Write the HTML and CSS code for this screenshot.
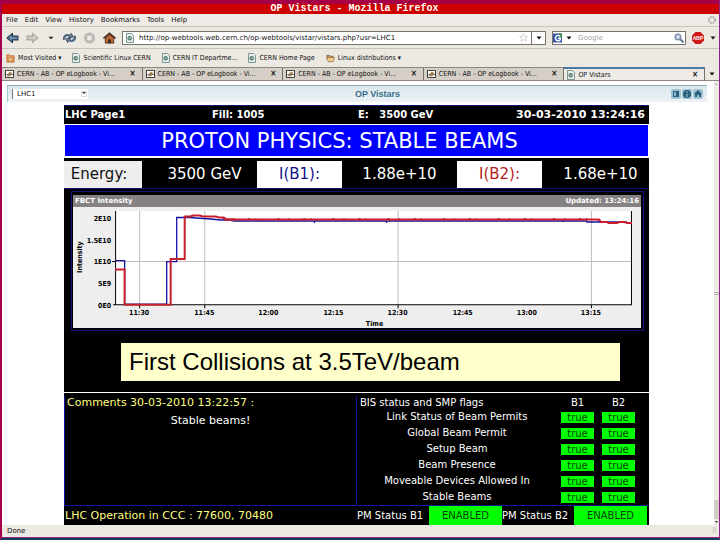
FILE: index.html
```html
<!DOCTYPE html>
<html lang="en">
<head>
<meta charset="utf-8">
<title>OP Vistars - Mozilla Firefox</title>
<link rel="stylesheet" href="styles.css">
</head>
<body>
<svg class="defs" aria-hidden="true">
  <symbol id="page" viewBox="0 0 8 10"><path d="M.5.5h5l2 2v7h-7z" fill="#e8eeea" stroke="#7c9990"/><circle cx="3.7" cy="5.3" r="2.2" fill="#527b74"/><path d="M2.5 5.2h2.3" stroke="#cfe0da"/></symbol>
  <symbol id="log" viewBox="0 0 10 9"><path d="M.5.5h9v8h-9z" fill="#fff" stroke="#222"/><path d="M2 7l3-5 3 1-2 4z" fill="#a08458"/><path d="M1.500 5.500l3-1M6 5h3" stroke="#6d5432"/></symbol>
  <symbol id="arrow" viewBox="0 0 12 10"><path d="M1 5l5-4.300v2.600h5v3.400H6v2.600z" stroke-linejoin="round"/></symbol>
</svg>
<div class="window">
  <header class="titlebar">OP Vistars - Mozilla Firefox</header>
  <nav class="menubar">
    <button>File</button><button>Edit</button><button>View</button><button>History</button><button>Bookmarks</button><button>Tools</button><button>Help</button>
    <svg class="throbber" viewBox="0 0 8 8"><circle cx="4" cy="4" r="3" fill="none" stroke="#aaa59d" stroke-width="2" stroke-dasharray="1.400 1"/></svg>
  </nav>
  <div class="toolbar">
    <div class="nav-buttons">
      <button aria-label="Back"><svg viewBox="0 0 12 10" fill="#668cab" stroke="#203448"><use href="#arrow"/></svg></button>
      <button aria-label="Forward"><svg viewBox="0 0 12 10"><path d="M1 3.300h5V1l5 4-5 4V6.700H1z" fill="#cfccc6" stroke="#aaa7a1"/></svg></button>
      <button class="narrow" aria-label="Recent pages"><svg viewBox="0 0 12 10"><path d="M3 3.500h6L6 6.500z" fill="#222"/></svg></button>
      <button aria-label="Reload"><svg viewBox="0 0 14 12"><path d="M2 7c0-3 2-4 5-3l-1 2 5-1-2-4-1 2C3 1 0 3 .500 8zM12 4c0 4-2 5-5 4l1-2-5 1 2 4 1-2c5 2 8 0 7.500-5z" fill="#6487a8" stroke="#22384e" stroke-width=".8"/></svg></button>
      <button aria-label="Stop"><svg viewBox="0 0 12 12"><circle cx="6" cy="6" r="5.500" fill="#bcb9b4"/><path d="M4 4l4 4M8 4L4 8" stroke="#f3f0ec" stroke-width="2"/></svg></button>
      <button aria-label="Home"><svg viewBox="0 0 14 12"><path d="M2.500 6v5.500h9V6L7 2z" fill="#b96936" stroke="#55301c"/><path d="M.500 6.500L7 1l6.500 5.500" fill="none" stroke="#4d2a1c" stroke-width="1.800"/><path d="M5.500 7.500h3v4h-3z" fill="#3e2519"/></svg></button>
    </div>
    <div class="urlbar">
      <svg class="favicon"><use href="#page"/></svg>
      <input class="url" type="text" aria-label="Location" value="http://op-webtools.web.cern.ch/op-webtools/vistar/vistars.php?usr=LHC1">
      <svg class="star" viewBox="0 0 10 10"><path d="M5 .8l1.200 2.900 3.200.2-2.500 2 .9 3.200L5 7.400 2.200 9.100l.9-3.200-2.500-2 3.200-.2z" fill="#fff" stroke="#c8c5c0" stroke-width=".8"/></svg>
      <button class="drop" aria-label="Show history"><svg viewBox="0 0 6 6"><path d="M.5 1.500h5L3 4.500z" fill="#111"/></svg></button>
    </div>
    <div class="search">
      <svg class="engine" viewBox="0 0 10 10"><path d="M0 0h10v10H0z" fill="#3259a8"/><path d="M6 0h4v5H7z" fill="#3b8b4c"/><path d="M7.800 3A3 3 0 1 0 8 7V5.300H5.500" fill="none" stroke="#fff" stroke-width="1.600"/></svg>
      <svg class="tri" viewBox="0 0 6 6"><path d="M.5 1.500h5L3 4.500z" fill="#111"/></svg>
      <input type="text" aria-label="Search" placeholder="Google">
      <svg class="glass" viewBox="0 0 10 10"><circle cx="4" cy="4" r="2.800" fill="#c9daea" stroke="#8094ad" stroke-width="1.500"/><path d="M6 6l3.500 3.500" stroke="#607a99" stroke-width="2"/></svg>
    </div>
    <button class="abp" aria-label="Adblock Plus"><svg viewBox="0 0 12 12"><path d="M3.500 0h5L12 3.500v5L8.500 12h-5L0 8.500v-5z" fill="#cf1717"/><text x="6" y="8.200" text-anchor="middle">ABP</text></svg></button>
    <svg class="tri" viewBox="0 0 6 6"><path d="M.5 1.500h5L3 4.500z" fill="#111"/></svg>
  </div>
  <nav class="bookmarks">
    <a href="#"><svg viewBox="0 0 10 10"><path d="M1 1h3l1 1h4v7H1z" fill="#dda069" stroke="#bd6f32"/><path d="M5 3l1 2 2 .2-1.500 1.300.5 2-2-1-2 1 .5-2L2 5.200 4 5z" fill="#f5d6a7" stroke="#c1661f" stroke-width=".6"/></svg>Most Visited ▾</a>
    <a href="#"><svg class="favicon"><use href="#page"/></svg>Scientific Linux CERN</a>
    <a href="#"><svg class="favicon"><use href="#page"/></svg>CERN IT Departme...</a>
    <a href="#"><svg class="favicon"><use href="#page"/></svg>CERN Home Page</a>
    <a href="#"><svg viewBox="0 0 10 10"><path d="M1 1.500h3l1 1h3V5H1z" fill="#c29152" stroke="#71522e" stroke-width=".7"/><path d="M1 4h8.500L8 8.500H2.500z" fill="#efd08d" stroke="#8c6533" stroke-width=".7"/></svg>Linux distributions ▾</a>
  </nav>
  <div class="tabs">
    <button class="tab"><svg><use href="#log"/></svg><span>CERN - AB - OP eLogbook - Vi...</span><b>×</b></button>
    <button class="tab"><svg><use href="#log"/></svg><span>CERN - AB - OP eLogbook - Vi...</span><b>×</b></button>
    <button class="tab"><svg><use href="#log"/></svg><span>CERN - AB - OP eLogbook - Vi...</span><b>×</b></button>
    <button class="tab"><svg><use href="#log"/></svg><span>CERN - AB - OP eLogbook - Vi...</span><b>×</b></button>
    <button class="tab active"><svg class="favicon"><use href="#page"/></svg><span>OP Vistars</span><b>×</b></button>
    <button class="tab-list" aria-label="List all tabs"><svg viewBox="0 0 6 6"><path d="M.5 1.500h5L3 4.500z" fill="#111"/></svg></button>
  </div>
  <div class="viewport">
    <main class="page">
      <div class="pagebar">
        <div class="picker"><select aria-label="Vistar"><option>LHC1</option></select></div>
        <h1>OP Vistars</h1>
        <div class="tools">
          <button aria-label="List"><svg viewBox="0 0 10 10"><path d="M2 2h6v6H2z"/><path d="M3 3h2v4H3z" fill="#8fb9cc"/></svg></button>
          <button aria-label="Information"><svg viewBox="0 0 10 10"><circle cx="5" cy="5" r="4"/><path d="M5 2.500V4M5 5v3" stroke="#a9cbd9"/></svg></button>
          <button aria-label="Home"><svg viewBox="0 0 10 10"><path d="M5 1l4 4H8v3H6V6H4v2H2V5H1z"/></svg></button>
        </div>
      </div>
      <section class="screen">
        <div class="info"><span>LHC Page1</span><span>Fill: 1005</span><span>E: &nbsp; 3500 GeV</span><span class="clock">30-03-2010 13:24:16</span></div>
        <h2 class="mode">PROTON PHYSICS: STABLE BEAMS</h2>
        <div class="values">
          <span class="label energy">Energy:</span><span class="reading">3500 GeV</span>
          <span class="label b1">I(B1):</span><span>1.88e+10</span>
          <span class="label b2">I(B2):</span><span class="reading">1.68e+10</span>
        </div>
        <div class="chart">
          <div class="chart-head"><span>FBCT Intensity</span><span>Updated: 13:24:16</span></div>
          <svg class="plot" viewBox="0 0 567 121">
            <path d="M42 4h516v94H42z" fill="#fff"/>
            <path d="M66.500 4v94M131.500 4v94M324.500 4v94M517.500 4v94M42 54.500h516" stroke="#bdbdbd" fill="none"/>
            <path d="M42.500 4v93.500h515V4M66.500 98v3M131.500 98v3M324.500 98v3M517.500 98v3M39 54.500h3M40 97.500h3" stroke="#000" fill="none"/>
            <path d="M42 53.500h9.500V97h42V54.500h10V10.500H117l6 .5 14 1 10 1h9l5 1h80v2-2h72v2-2h176v1-1h24v1h12v-2 2h28" stroke="#1212a0" stroke-width="1.300" fill="none"/>
            <path d="M151 12.500H525" stroke="#cd1c2c" stroke-width="2" fill="none"/>
            <path d="M149 11.500H526" stroke="#cd1c2c" stroke-dasharray="2 9 1 14 2 5 1 21" fill="none"/>
            <path d="M42 62.500h9.500V97.500h46V52h14V9.500h6l2-1h7l3 1h13l3 1h5l3 2h8" stroke="#c8202c" stroke-width="2" fill="none"/>
            <path d="M525 12l2 3h6l2 1h8l2-1h6l2 1h5" stroke="#cd1c2c" stroke-width="2" fill="none"/>
            <g class="ylab"><text x="38" y="14">2E10</text><text x="38" y="36">1.5E10</text><text x="38" y="57">1E10</text><text x="38" y="79">5E9</text><text x="38" y="101">0E0</text></g>
            <g class="xlab"><text x="66" y="108">11:30</text><text x="131" y="108">11:45</text><text x="195" y="108">12:00</text><text x="260" y="108">12:15</text><text x="324" y="108">12:30</text><text x="389" y="108">12:45</text><text x="453" y="108">13:00</text><text x="517" y="108">13:15</text><text x="301" y="119">Time</text><text transform="translate(9 50) rotate(-90)">Intensity</text></g>
          </svg>
        </div>
        <p class="note">First Collisions at 3.5TeV/beam</p>
        <div class="lower">
          <div class="comments"><h3>Comments 30-03-2010 13:22:57 :</h3><p>Stable beams!</p></div>
          <table class="flags">
            <thead><tr><th>BIS status and SMP flags</th><th>B1</th><th>B2</th></tr></thead>
            <tbody>
              <tr><td>Link Status of Beam Permits</td><td><i>true</i></td><td><i>true</i></td></tr>
              <tr><td>Global Beam Permit</td><td><i>true</i></td><td><i>true</i></td></tr>
              <tr><td>Setup Beam</td><td><i>true</i></td><td><i>true</i></td></tr>
              <tr><td>Beam Presence</td><td><i>true</i></td><td><i>true</i></td></tr>
              <tr><td>Moveable Devices Allowed In</td><td><i>true</i></td><td><i>true</i></td></tr>
              <tr><td>Stable Beams</td><td><i>true</i></td><td><i>true</i></td></tr>
            </tbody>
          </table>
        </div>
        <div class="operation"><span class="phone">LHC Operation in CCC : 77600, 70480</span><span>PM Status B1</span><span class="on">ENABLED</span><span>PM Status B2</span><span class="on">ENABLED</span></div>
      </section>
    </main>
    <div class="scrollbar"><svg class="up" viewBox="0 0 6 6"><path d="M1 4h4L3 2z" fill="#aaa"/></svg><span class="grip"></span><span class="thumb"></span><svg viewBox="0 0 6 6"><path d="M1 2h4L3 4z" fill="#111"/></svg></div>
  </div>
  <footer class="status"><span>Done</span><span class="resize">⠿</span></footer>
</div>
</body>
</html>
```
FILE: styles.css
```css
* { box-sizing: border-box; }
body { margin: 0; background: #a4004c; font: 7px/10px "DejaVu Sans", sans-serif; color: #111; }
button, input, select { font: inherit; color: inherit; border: 0; padding: 0; margin: 0; background: none; min-width: 0; }
h1, h2, h3, p { margin: 0; font-weight: normal; }
a { color: inherit; text-decoration: none; }
svg { display: block; flex: none; }
.defs { position: absolute; width: 0; height: 0; }

.window { min-height: 100vh; display: flex; flex-direction: column; border-left: 2px solid #a4004c; border-right: 1px solid #94208c; border-bottom: 2px solid #173d55; }
.titlebar { border-top: 4px solid #a60046; background: #cc0000; color: #fff; height: 14px; font: bold 10px/10px "Liberation Mono", monospace; text-align: center; padding-right: 12px; }
.menubar { display: flex; align-items: center; gap: 7px; height: 13px; padding: 0 3px 0 4px; background: #eeebe6; border-bottom: 1px solid #cbc6bd; }
.throbber { width: 8px; height: 8px; margin-left: auto; }

.toolbar { display: flex; align-items: center; height: 22px; gap: 6px; padding: 0 3px 0 4px; background: #ece8e2; border-bottom: 1px solid #c9c4bb; }
.nav-buttons { display: flex; align-items: center; gap: 7px; }
.nav-buttons svg { width: 13px; height: 12px; }
.nav-buttons .narrow svg { width: 10px; }
.urlbar, .search { display: flex; align-items: center; height: 14px; background: #fff; border: 1px solid #77736b; }
.urlbar { flex: 1; padding-left: 3px; gap: 3px; }
.favicon { width: 8px; height: 10px; }
.urlbar input, .search input { flex: 1; height: 12px; outline: 0; }
.url { padding-left: 2px; }
.star { width: 9px; height: 9px; }
.drop { width: 14px; height: 12px; border-left: 1px solid #77736b; display: flex; align-items: center; justify-content: center; }
.drop svg, .tri { width: 6px; height: 6px; }
.search { width: 134px; gap: 4px; padding-right: 1px; }
.search input::placeholder { color: #a5a5a5; opacity: 1; }
.search input { padding-left: 2px; }
.engine { width: 9px; height: 10px; }
.glass { width: 10px; height: 10px; }
.abp svg { width: 12px; height: 12px; }
.abp text { font: bold 5px "Liberation Sans", sans-serif; fill: #fff; }

.bookmarks, .tabs, .plot { font-family: "DejaVu Sans Condensed", "DejaVu Sans", sans-serif; }
.bookmarks { display: flex; align-items: center; gap: 11px; height: 18px; padding: 0 4px; background: #ece8e2; }
.bookmarks a { display: flex; align-items: center; gap: 3px; white-space: nowrap; }
.bookmarks svg:not(.favicon) { width: 9px; height: 9px; }

.tabs { display: flex; height: 14px; background: #d8d3cb; border-bottom: 1px solid #8e8981; }
.tab { flex: 1; display: flex; align-items: center; gap: 3px; padding: 0 6px 0 3px; background: #d6cfc7; border-top: 1px solid #8c867d; border-right: 1px solid #77716a; white-space: nowrap; }
.tab svg:not(.favicon) { width: 9px; height: 8px; }
.tab span { flex: 1; text-align: left; }
.tab b { font-size: 8px; }
.tab.active { background: #eeebe7; border-top: 2px solid #4a7ba8; }
.tab-list { width: 14px; display: flex; align-items: center; justify-content: center; background: #ece8e2; }
.tab-list svg { width: 6px; height: 6px; }

.viewport { flex: 1; display: flex; background: #fff; }
.page { flex: 1; display: flex; flex-direction: column; padding-top: 4px; }
.pagebar { display: grid; grid-template-columns: 1fr auto 1fr; align-items: center; height: 17px; margin: 0 7px 3px 5px; padding: 0 4px; background: linear-gradient(#dce7ec, #edf2f5); border-top: 1px solid #8fb2c2; border-left: 1px solid #a9c5d1; }
.picker { justify-self: start; width: 76px; display: flex; background: #fff; position: relative; }
.picker select { appearance: none; width: 100%; height: 10px; padding-left: 4px; border-left: 1px solid #777; }
.picker::after { content: ""; position: absolute; right: 2px; top: 3px; border: 2px solid transparent; border-top-color: #333; box-shadow: 0 0 0 1px #ddd; }
.pagebar h1 { font: bold 9px/12px "Liberation Sans", sans-serif; color: #39708f; padding-left: 40px; }
.tools { justify-self: end; display: flex; gap: 1px; }
.tools button { background: #9dc2d2; border-radius: 2px; }
.tools svg { width: 10px; height: 10px; fill: #27617d; }

.screen { flex: 1; display: flex; flex-direction: column; margin: 0 65px 0 62px; background: #000; color: #fff; font-size: 10px; line-height: 12px; }
.info { display: grid; grid-template-columns: 147px 146px 1fr auto; align-items: center; height: 19px; padding: 0 4px 0 1px; font-weight: bold; border-top: 1px solid #14146e; }
.clock { font-size: 11px; }
.mode { height: 34px; font-size: 21px; line-height: 32px; text-align: center; background: #0000fe; border: 1px solid #fff; border-bottom: 2px solid #fff; padding-right: 34px; }
.values { display: grid; grid-template-columns: 78px 115px 85px 115px 85px 1fr; align-items: center; height: 31px; padding: 3px 0 1px; font-size: 15px; line-height: 27px; text-align: center; border-bottom: 1px solid #14146e; }
.label { background: #fff; }
.energy { background: #eee; color: #111; padding-right: 8px; }
.reading { padding-left: 10px; }
.b1 { color: #12128a; }
.b2 { color: #b51c1c; }
.chart { margin: 2px 5px 0 7px; padding: 3px 2px 2px 1px; border: 1px solid #14147c; }
.chart-head { display: flex; justify-content: space-between; height: 12px; padding: 0 2px; background: #868284; font-size: 7px; font-weight: bold; }
.plot { width: 100%; background: #eee; font-size: 7px; font-weight: bold; }
.ylab { text-anchor: end; }
.xlab { text-anchor: middle; }
.note { margin: 12px 29px 11px 57px; padding: 0 8px; background: #ffffcc; color: #000; font: 24px/38px "Liberation Sans", sans-serif; }
.lower { flex: 1; display: grid; grid-template-columns: 293px 1fr; border-top: 1px solid #fff; border-bottom: 1px solid #1414a0; padding-top: 3px; }
.comments { border-right: 1px solid #1414a0; border-left: 1px solid #1414a0; text-align: center; font-size: 11px; padding-top: 1px; }
.comments h3 { font-size: 11px; line-height: 12px; color: #ffff80; text-align: left; padding-left: 2px; margin-bottom: 6px; }
.flags { width: 100%; border-spacing: 0; table-layout: fixed; }
.flags th, .flags td { font-weight: normal; padding: 0; text-align: center; height: 16px; }
.flags th { height: 13px; }
.flags th:first-child { width: 200px; text-align: left; padding-left: 3px; }
.flags th:nth-child(2) { width: 41px; }
.flags th:nth-child(3) { padding-right: 10px; }
.flags td:nth-child(3) { padding-right: 10px; }
.flags i { display: block; width: 33px; margin: 0 auto; font-style: normal; line-height: 11px; background: #00ff00; color: #053f05; }
.operation { display: grid; grid-template-columns: 293px 72px 73px 72px 73px; height: 19px; line-height: 19px; white-space: nowrap; }
.phone { color: #ffff80; padding-left: 1px; font-size: 11px; }
.on { background: #00ff00; color: #053f05; text-align: center; }

.scrollbar { width: 5px; display: flex; flex-direction: column; background: #eeebe3; }
.scrollbar svg { width: 5px; height: 6px; }
.grip { margin: auto 0; height: 3px; border-top: 1px solid #aaa; border-bottom: 1px solid #aaa; }
.thumb { height: 19px; background: #d3cec5; }
.status { display: flex; justify-content: space-between; height: 13px; line-height: 12px; padding: 0 2px 0 5px; background: #ece8e2; border-bottom: 1px solid #94208c; }
.resize { color: #aaa; }
```
